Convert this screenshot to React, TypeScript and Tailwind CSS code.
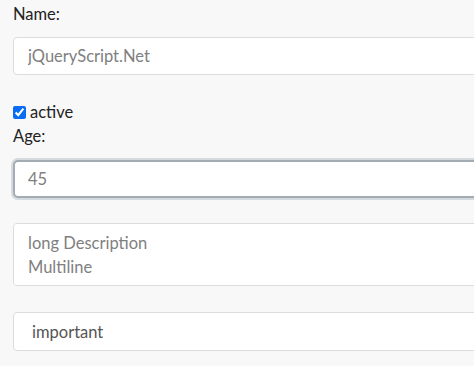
import React, { useState } from 'react';

const inputBase =
  "block w-[620px] bg-white rounded-[4px] border border-[#dcdcdc] text-[16.5px] text-[#555] placeholder:text-[#808080] outline-none";

const App = () => {
  const [active, setActive] = useState(true);

  return (
    <div
      className="w-screen h-[366px] overflow-hidden bg-[#f8f8f8] pl-[13px] pt-[2px]"
      style={{ fontFamily: "Lato, 'Open Sans', sans-serif" }}
    >
      <label className="block text-[16.5px] leading-6 text-[#222]">Name:</label>
      <input
        type="text"
        placeholder="jQueryScript.Net"
        className={`${inputBase} mt-[11px] h-[38px] px-[14px]`}
      />

      <div className="mt-[25px] flex items-center h-6">
        <input
          id="active"
          type="checkbox"
          checked={active}
          onChange={(e) => setActive(e.target.checked)}
          className="m-0 h-[13px] w-[13px] accent-[#0a6cf5]"
        />
        <label htmlFor="active" className="ml-[4px] text-[16.5px] leading-6 text-[#222]">
          active
        </label>
      </div>
      <label className="block text-[16.5px] leading-6 text-[#222]">Age:</label>

      <input
        type="text"
        placeholder="45"
        className="block w-[620px] h-[38px] mt-[12px] bg-white rounded-[5px] border-2 border-[#a3abb3] shadow-[0_0_0_2px_#d5dadf] px-[13px] text-[16.5px] text-[#555] placeholder:text-[#808080] outline-none"
      />

      <textarea
        placeholder={"long Description\nMultiline"}
        className={`${inputBase} mt-[25px] h-[63px] px-[14px] py-[7px] leading-6 resize-none`}
      />

      <input
        type="text"
        defaultValue="important"
        className={`${inputBase} mt-[26px] h-[39px] px-[18px]`}
      />
    </div>
  );
};

export default App;
